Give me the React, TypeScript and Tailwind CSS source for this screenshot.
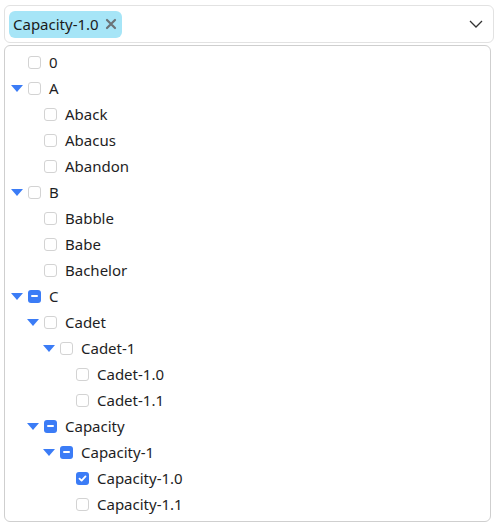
import React from "react";

type Node = { label: string; level: number; expandable?: boolean; state?: "none" | "checked" | "partial" };

const rows: Node[] = [
  { label: "0", level: 0 },
  { label: "A", level: 0, expandable: true },
  { label: "Aback", level: 1 },
  { label: "Abacus", level: 1 },
  { label: "Abandon", level: 1 },
  { label: "B", level: 0, expandable: true },
  { label: "Babble", level: 1 },
  { label: "Babe", level: 1 },
  { label: "Bachelor", level: 1 },
  { label: "C", level: 0, expandable: true, state: "partial" },
  { label: "Cadet", level: 1, expandable: true },
  { label: "Cadet-1", level: 2, expandable: true },
  { label: "Cadet-1.0", level: 3 },
  { label: "Cadet-1.1", level: 3 },
  { label: "Capacity", level: 1, expandable: true, state: "partial" },
  { label: "Capacity-1", level: 2, expandable: true, state: "partial" },
  { label: "Capacity-1.0", level: 3, state: "checked" },
  { label: "Capacity-1.1", level: 3 },
];

function Box({ state }: { state?: string }) {
  if (state === "checked") {
    return (
      <span className="w-[13px] h-[13px] rounded-[3px] bg-[#3b7cf6] flex items-center justify-center">
        <svg width="9" height="9" viewBox="0 0 9 9">
          <path d="M1.5 4.6 L3.6 6.6 L7.5 2.4" stroke="white" strokeWidth="1.8" fill="none" strokeLinecap="round" strokeLinejoin="round" />
        </svg>
      </span>
    );
  }
  if (state === "partial") {
    return (
      <span className="w-[13px] h-[13px] rounded-[3px] bg-[#3b7cf6] flex items-center justify-center">
        <span className="w-[7px] h-[2px] bg-white rounded-[1px]" />
      </span>
    );
  }
  return <span className="w-[13px] h-[13px] rounded-[3px] border border-[#d3d3d3] bg-white" />;
}

export default function App() {
  return (
    <div className="w-[499px] h-[529px] bg-white relative" style={{ fontFamily: '"Segoe UI", "Noto Sans", sans-serif' }}>
      <div className="absolute left-[4px] top-[5px] w-[490px] h-[38px] border border-[#e2e2e2] rounded-[6px] flex items-center pl-[4px] pr-[10px]">
        <div className="h-[27px] rounded-[6px] bg-[#a6e5f7] flex items-center pl-[4px] pr-[5px] gap-[6px] text-[15px] text-[#1b1b1b]">
          <span>Capacity-1.0</span>
          <svg width="12" height="12" viewBox="0 0 12 12">
            <path d="M2 2 L10 10 M10 2 L2 10" stroke="#6b7377" strokeWidth="2.2" strokeLinecap="round" />
          </svg>
        </div>
        <div className="flex-1" />
        <svg width="14" height="8" viewBox="0 0 14 8">
          <path d="M1 1 L7 7 L13 1" stroke="#333" strokeWidth="1.3" fill="none" />
        </svg>
      </div>
      <div className="absolute left-[4px] top-[45px] w-[487px] h-[477px] border border-[#cfcfcf] rounded-[6px] pt-[3px]">
        {rows.map((r, i) => (
          <div key={i} className="h-[26px] flex items-center text-[15px] text-[#1e1e24]" style={{ paddingLeft: 6 + r.level * 16 }}>
            <span className="w-[12px] h-[7px] mr-[5px] flex items-center justify-center">
              {r.expandable && (
                <svg width="12" height="7" viewBox="0 0 12 7">
                  <path d="M0 0 L12 0 L6 7 Z" fill="#3b7cf6" />
                </svg>
              )}
            </span>
            <Box state={r.state} />
            <span className="ml-[8px] leading-none">{r.label}</span>
          </div>
        ))}
      </div>
    </div>
  );
}
